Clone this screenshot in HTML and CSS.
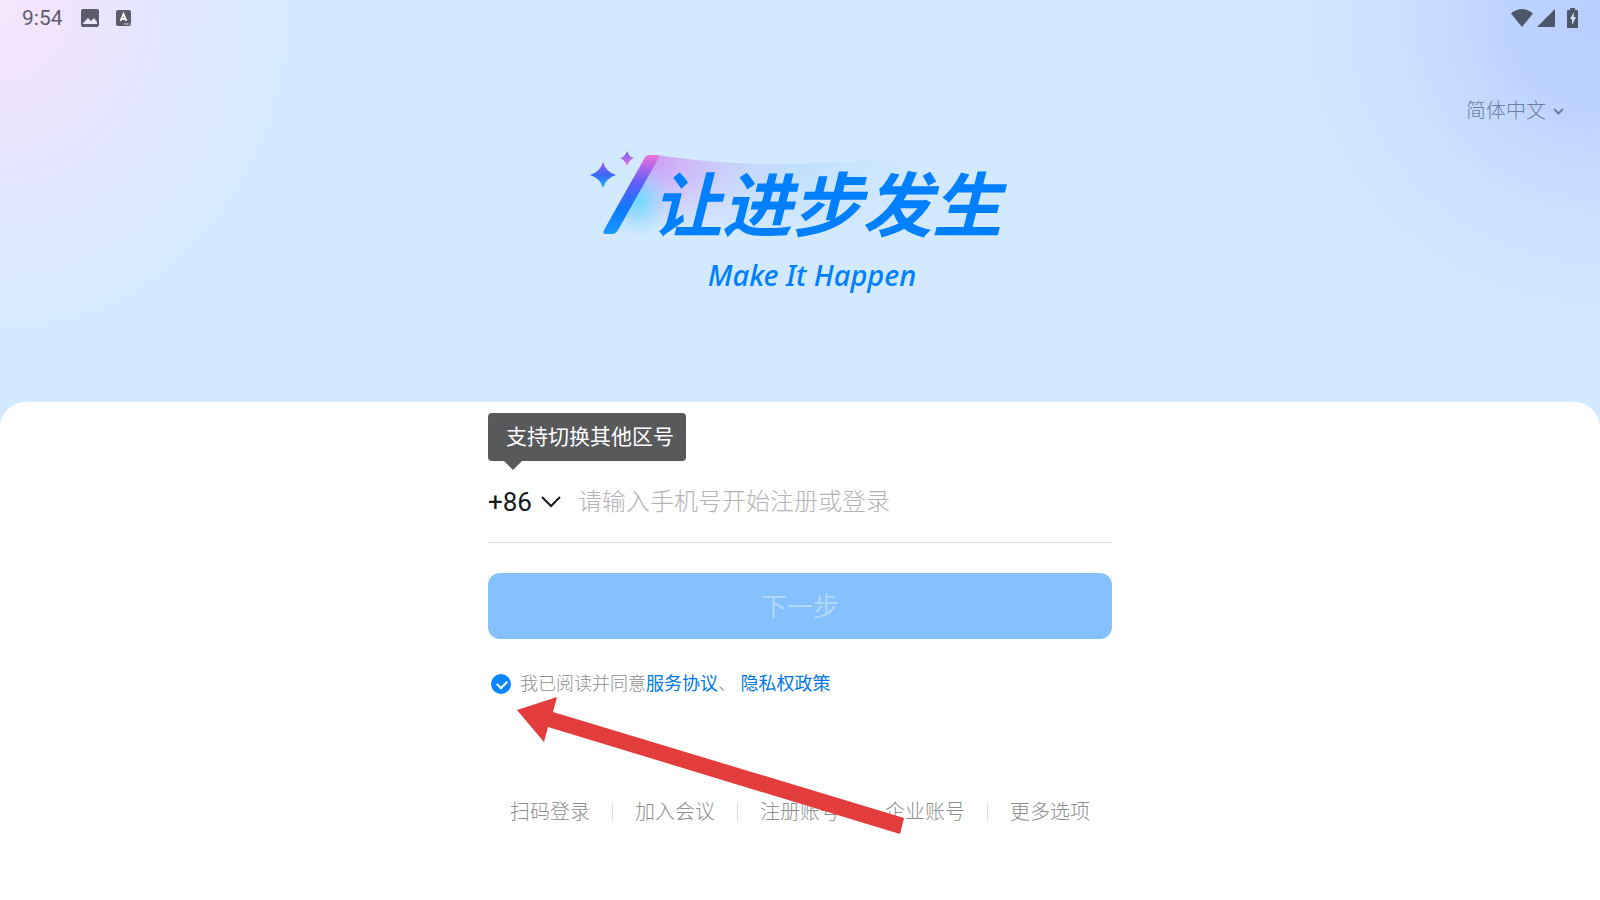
FILE: index.html
```html
<!DOCTYPE html>
<html lang="zh-CN">
<head>
  <meta charset="UTF-8" />
  <meta name="viewport" content="width=device-width, initial-scale=1.0"/>
  <title>让进步发生</title>
  <link rel="stylesheet" href="styles.css">
</head>
<body>

  <div class="status-bar">
    <div class="status-left">
      <span class="clock">9:54</span>
      <svg class="icon-image" width="18" height="18" viewBox="0 0 18 18">
        <path fill="currentColor" fill-rule="evenodd" d="M2 0h14a2 2 0 0 1 2 2v14a2 2 0 0 1-2 2H2a2 2 0 0 1-2-2V2a2 2 0 0 1 2-2zM2 15h14v-2l-3-4-3 3-3-3-5 5z"/>
      </svg>
      <svg class="icon-input" width="15" height="16" viewBox="0 0 15 16">
        <rect width="15" height="16" rx="2" fill="currentColor"/>
        <path d="M4.500 11L7.500 4L10.500 11M5.500 9h4" fill="none" stroke="#fff" stroke-width="1.800"/>
        <path d="M8 14h1.500M10.500 14h1.500M13 14h1" stroke="#fff" stroke-width="1.200"/>
      </svg>
    </div>
    <div class="status-right">
      <svg width="22" height="18" viewBox="0 0 22 18">
        <path fill="currentColor" d="M11 18L0 4.500C3 1.500 7 0 11 0s8 1.500 11 4.500z"/>
      </svg>
      <svg width="18" height="18" viewBox="0 0 18 18">
        <path fill="currentColor" d="M18 0v18H0z"/>
      </svg>
      <svg class="icon-battery" width="11" height="20" viewBox="0 0 11 20">
        <path fill="currentColor" d="M3 0h5v2h2a1 1 0 0 1 1 1v16a1 1 0 0 1-1 1H1a1 1 0 0 1-1-1V3a1 1 0 0 1 1-1h2z"/>
        <path fill="#d3e0ff" d="M7 4L3 11h2v6l4-8H6.500z"/>
      </svg>
    </div>
  </div>

  <header>
    <div class="select-box language">
      <select aria-label="语言">
        <option>简体中文</option>
      </select>
      <svg width="11" height="7" viewBox="0 0 11 7">
        <path d="M1 1l4.500 4.500L10 1" fill="none" stroke="currentColor" stroke-width="2"/>
      </svg>
    </div>

    <div class="brand">
      <svg class="brand-art" width="350" height="90" viewBox="0 0 350 90">
        <defs>
          <linearGradient id="stick" x1="0" y1="1" x2="0" y2="0">
            <stop offset="0" stop-color="#1a9cff"/>
            <stop offset=".3" stop-color="#0a7cfc"/>
            <stop offset=".65" stop-color="#5f5cf8"/>
            <stop offset="1" stop-color="#f070dc"/>
          </linearGradient>
          <linearGradient id="star" x1="0" y1="0" x2="0" y2="1">
            <stop offset="0" stop-color="#a45cf0"/>
            <stop offset=".5" stop-color="#3a68f5"/>
            <stop offset="1" stop-color="#22b4ff"/>
          </linearGradient>
          <linearGradient id="small-star" x1="0" y1="0" x2="0" y2="1">
            <stop offset="0" stop-color="#6a5cf8"/>
            <stop offset="1" stop-color="#f078e0"/>
          </linearGradient>
          <linearGradient id="veil" x1="0" y1="0" x2="1" y2="0">
            <stop offset="0" stop-color="#c47cf8"/>
            <stop offset=".22" stop-color="#cfaaf6" stop-opacity=".9"/>
            <stop offset=".42" stop-color="#bfcdf8" stop-opacity=".7"/>
            <stop offset=".6" stop-color="#b2d8fc" stop-opacity=".6"/>
            <stop offset="1" stop-color="#c4e2fe" stop-opacity="0"/>
          </linearGradient>
          <linearGradient id="fade" x1="0" y1="0" x2="0" y2="1">
            <stop offset="0" stop-color="#fff"/>
            <stop offset=".3" stop-color="#fff" stop-opacity=".8"/>
            <stop offset=".85" stop-color="#fff" stop-opacity="0"/>
          </linearGradient>
          <radialGradient id="glow">
            <stop offset="0" stop-color="#62dcff" stop-opacity=".95"/>
            <stop offset="1" stop-color="#9ae4ff" stop-opacity="0"/>
          </radialGradient>
          <mask id="veil-mask">
            <rect width="350" height="90" fill="url(#fade)"/>
          </mask>
          <clipPath id="veil-clip">
            <path d="M68 4C150 18 260 14 345 2L340 90H14z"/>
          </clipPath>
        </defs>
        <path mask="url(#veil-mask)" fill="url(#veil)" d="M68 4C150 18 260 14 345 2L320 84H22z"/>
        <ellipse clip-path="url(#veil-clip)" cx="48" cy="50" rx="34" ry="38" fill="url(#glow)"/>
        <path fill="url(#stick)" d="M66 4h-6q-4 0-6 4L14 79q-2 4 2 4h6q4 0 6-4L68 8q2-4-2-4z"/>
        <path fill="url(#star)" d="M13 11q3 10 13 13-10 3-13 13-3-10-13-13 10-3 13-13z"/>
        <path fill="url(#small-star)" d="M37 0q2 6 7 7-5 2-7 8-2-6-7-8 5-1 7-7z"/>
      </svg>
      <h1>让进步发生</h1>
      <p>Make It Happen</p>
    </div>
  </header>

  <main>
    <form class="container" onsubmit="return false">
      <div class="tooltip">支持切换其他区号</div>

      <div class="phone-row">
        <div class="select-box area-code">
          <select aria-label="区号">
            <option>+86</option>
          </select>
          <svg width="20" height="12" viewBox="0 0 20 12">
            <path d="M1 1l9 9 9-9" fill="none" stroke="currentColor" stroke-width="2"/>
          </svg>
        </div>
        <input type="tel" class="phone" aria-label="手机号" placeholder="请输入手机号开始注册或登录">
      </div>

      <button type="submit" class="button" disabled>下一步</button>

      <div class="agreement">
        <input type="checkbox" id="agree" checked>
        <label for="agree">我已阅读并同意<a href="#">服务协议</a>、 <a href="#">隐私权政策</a></label>
      </div>

      <nav>
        <a href="#">扫码登录</a>
        <a href="#">加入会议</a>
        <a href="#">注册账号</a>
        <a href="#">企业账号</a>
        <a href="#">更多选项</a>
      </nav>

      <svg class="pointer" width="388" height="138" viewBox="0 0 388 138">
        <path fill="#e23c3c" d="M0 13L40 0L36 15L387 121L383 137L31 30L27 45z"/>
      </svg>
    </form>
  </main>

</body>
</html>
```
FILE: styles.css
```css
* {
  box-sizing: border-box;
}

body {
  font-family: Roboto, "Noto Sans CJK SC", sans-serif;
  font-weight: 300;
  margin: 0;
  min-height: 100vh;
  display: flex;
  flex-direction: column;
  background:
    radial-gradient(ellipse 300px 340px at 0 0, #f6e5fd 0%, #ebe5fd 35%, #dfe6fe 60%, rgba(211, 233, 255, 0) 100%),
    radial-gradient(ellipse 330px 320px at 100% 20px, #b8ceff 0%, #bed4ff 30%, rgba(200, 222, 255, 0.8) 60%, rgba(211, 233, 255, 0) 100%),
    #d3e9ff;
}

input,
select,
button {
  font-family: inherit;
  font-weight: inherit;
  margin: 0;
  padding: 0;
  border: none;
  background: none;
}

a {
  text-decoration: none;
}

.status-bar {
  height: 36px;
  padding: 0 22px;
  display: flex;
  align-items: center;
  justify-content: space-between;
}

.status-left,
.status-right {
  display: flex;
  align-items: center;
}

.status-left {
  color: #5c5c6c;
}

.status-right {
  gap: 4px;
  color: #4b5668;
}

.clock {
  font-size: 21px;
  font-weight: 400;
}

.icon-image {
  margin-left: 18px;
}

.icon-input {
  margin-left: 17px;
}

.icon-battery {
  margin-left: 8px;
}

header {
  height: 366px;
  padding: 60px 36px 0;
}

.select-box {
  display: flex;
  align-items: center;
}

.select-box select {
  appearance: none;
  color: inherit;
  font-size: inherit;
}

.language {
  justify-content: flex-end;
  gap: 7px;
  height: 30px;
  font-size: 20px;
  color: #6c7f9f;
}

.brand {
  position: relative;
  width: 420px;
  margin: 25px auto 0;
  padding-top: 18px;
  color: #0080ff;
}

.brand-art {
  position: absolute;
  left: 0;
  top: 0;
}

h1 {
  position: relative;
  margin: 0;
  padding-left: 62px;
  font-size: 70px;
  font-weight: 700;
  font-style: italic;
  line-height: 76px;
  white-space: nowrap;
}

.brand p {
  margin: 10px 0 0;
  padding-left: 24px;
  font-family: "Noto Sans", sans-serif;
  font-size: 29px;
  font-weight: 500;
  font-style: italic;
  line-height: 40px;
  text-align: center;
}

main {
  flex: 1;
  padding: 11px 20px 0;
  border-radius: 26px 26px 0 0;
  background: #fff;
}

.container {
  position: relative;
  max-width: 624px;
  margin: 0 auto;
}

.tooltip {
  position: relative;
  width: fit-content;
  padding: 0 12px 0 18px;
  border-radius: 4px;
  background: #58595b;
  color: #fff;
  font-size: 21px;
  font-weight: 400;
  line-height: 48px;
}

.tooltip::after {
  content: '';
  position: absolute;
  left: 16px;
  top: 100%;
  border: 9px solid transparent;
  border-top-color: #58595b;
  border-bottom: none;
}

.phone-row {
  display: flex;
  align-items: center;
  gap: 17px;
  height: 82px;
  border-bottom: 1px solid #dedfe1;
}

.area-code {
  gap: 9px;
  font-size: 26px;
  font-weight: 400;
  color: #16181a;
}

.phone {
  flex: 1;
  height: 40px;
  font-size: 24px;
  outline: none;
}

.phone::placeholder {
  color: #b4b4b4;
}

.button {
  display: block;
  width: 100%;
  height: 66px;
  margin-top: 30px;
  padding-bottom: 3px;
  border-radius: 12px;
  background: #85c0ff;
  color: #b3d8ff;
  font-size: 26px;
  font-weight: 400;
}

.agreement {
  display: flex;
  align-items: center;
  gap: 9px;
  margin-top: 29px;
  padding-left: 3px;
  font-size: 18px;
  line-height: 32px;
  color: #8e8e8e;
}

.agreement input {
  position: relative;
  appearance: none;
  width: 20px;
  height: 20px;
  border-radius: 50%;
}

.agreement input:checked {
  background: #0a84ff;
}

.agreement input:checked::after {
  content: '';
  position: absolute;
  left: 6px;
  top: 6px;
  width: 8px;
  height: 5px;
  border-left: 2px solid #fff;
  border-bottom: 2px solid #fff;
  transform: rotate(-45deg);
}

.agreement a {
  color: #0078e8;
  font-weight: 400;
}

nav {
  display: flex;
  justify-content: center;
  margin-top: 97px;
}

nav a {
  display: flex;
  align-items: center;
  font-size: 20px;
  line-height: 30px;
  color: #8e8e8e;
}

nav a + a::before {
  content: '';
  width: 1px;
  height: 18px;
  margin: 0 22px;
  background: #dedede;
}

.pointer {
  position: absolute;
  left: 29px;
  top: 284px;
  pointer-events: none;
}
```
